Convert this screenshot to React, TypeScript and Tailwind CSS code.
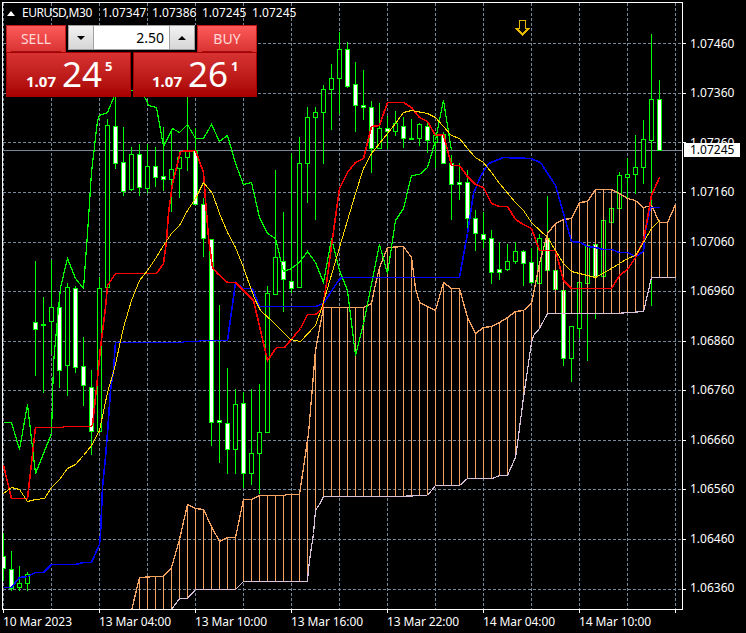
import React from "react";

type Pt = [number, number];
// x, high, low, bodyTop, bodyBottom, bearish (white body)
type Candle = [number, number, number, number, number, boolean];

const candles: Candle[] = [
  [3, 533, 580, 556, 568, true], [11, 551, 590, 569, 588, true], [19, 566, 590, 583, 587, false], [27, 572, 590, 574, 583, false],
  [35, 261, 375, 322, 329, true], [43, 297, 392, 324, 325, false], [51, 260, 353, 307, 321, false], [59, 302, 387, 307, 370, true],
  [67, 283, 395, 287, 365, false], [75, 286, 372, 288, 367, true], [83, 337, 405, 366, 385, true], [91, 370, 454, 387, 431, true],
  [99, 277, 432, 288, 431, false], [107, 119, 287, 125, 287, false], [115, 97, 168, 126, 163, true], [123, 127, 195, 162, 191, true],
  [131, 147, 190, 154, 189, false], [139, 144, 195, 154, 187, true], [147, 144, 192, 166, 188, false], [155, 147, 186, 166, 177, true],
  [163, 127, 190, 176, 179, true], [171, 130, 211, 169, 179, false], [179, 150, 197, 157, 168, false], [187, 97, 170, 150, 157, false],
  [195, 128, 204, 150, 204, true], [203, 198, 256, 204, 238, true], [211, 239, 445, 239, 422, true], [219, 305, 462, 420, 422, true],
  [227, 368, 473, 423, 449, true], [235, 389, 473, 404, 449, false], [243, 392, 487, 403, 473, true], [251, 389, 484, 453, 473, false],
  [259, 384, 493, 432, 453, false], [267, 286, 432, 293, 432, false], [275, 170, 294, 257, 294, false], [283, 212, 311, 261, 279, true],
  [291, 153, 292, 281, 288, true], [299, 137, 287, 163, 287, false], [307, 107, 202, 117, 163, false], [315, 107, 219, 112, 117, false],
  [323, 85, 163, 89, 112, false], [331, 64, 129, 78, 89, false], [339, 32, 113, 49, 78, false], [347, 42, 87, 49, 86, true],
  [355, 62, 131, 84, 105, true], [363, 70, 119, 105, 107, true], [371, 101, 172, 107, 148, true], [379, 103, 148, 128, 148, false],
  [387, 116, 148, 128, 131, true], [395, 111, 135, 123, 131, false], [403, 117, 147, 126, 138, true], [411, 119, 139, 138, 138, false],
  [419, 123, 145, 124, 138, false], [427, 123, 152, 126, 140, true], [435, 133, 167, 135, 142, false], [443, 132, 163, 134, 163, true],
  [451, 155, 219, 163, 184, true], [459, 163, 199, 182, 184, true], [467, 170, 230, 182, 218, true], [475, 210, 250, 218, 233, true],
  [483, 212, 247, 234, 239, true], [491, 230, 283, 238, 272, true], [499, 242, 279, 269, 272, true], [507, 244, 270, 261, 269, false],
  [515, 242, 263, 251, 261, false], [523, 250, 285, 251, 263, true], [531, 248, 283, 262, 282, true], [539, 234, 284, 238, 283, false],
  [547, 196, 270, 238, 270, true], [555, 270, 289, 270, 289, true], [563, 290, 365, 290, 358, true], [571, 326, 381, 326, 358, false],
  [579, 282, 337, 282, 328, false], [587, 245, 360, 245, 283, false], [595, 244, 318, 244, 276, true], [603, 220, 276, 220, 276, false],
  [611, 208, 222, 208, 222, false], [619, 172, 208, 175, 208, false], [627, 158, 197, 174, 177, false], [635, 135, 193, 167, 174, false],
  [643, 120, 183, 139, 167, false], [651, 34, 305, 99, 140, false], [659, 80, 150, 99, 150, true],
];

const red: Pt[] = [[3,465],[11,498],[27,498],[35,427],[63,427],[63,426],[90,426],[92,425],[97,378],[100,347],[105,307],[107,285],[115,273],[156,273],[163,263],[166,240],[168,213],[172,183],[180,151],[195,150],[203,172],[205,200],[208,237],[212,267],[217,273],[227,282],[235,282],[253,300],[267,360],[276,347],[284,347],[300,328],[307,314],[315,314],[322,308],[326,283],[332,238],[339,188],[347,172],[355,162],[363,158],[371,126],[379,125],[387,102],[403,102],[411,107],[419,117],[427,121],[435,135],[443,134],[451,165],[459,165],[467,176],[475,184],[483,187],[491,203],[499,206],[507,206],[515,219],[523,224],[531,228],[539,250],[555,250],[563,280],[571,288],[611,288],[619,275],[627,269],[635,257],[643,240],[651,195],[659,177]];
const gold: Pt[] = [[3,493],[11,487],[19,489],[27,501],[35,499],[44,498],[51,487],[59,479],[67,468],[75,464],[83,455],[91,445],[99,430],[107,392],[114,368],[123,327],[131,300],[139,280],[147,270],[155,258],[163,245],[171,233],[179,225],[187,210],[195,198],[203,182],[212,193],[219,213],[227,232],[235,247],[243,267],[250,287],[255,300],[260,310],[273,322],[290,339],[300,341],[315,325],[322,305],[327,288],[339,247],[355,193],[363,168],[371,153],[379,143],[387,133],[395,123],[403,112],[411,110],[427,113],[435,117],[443,126],[451,135],[459,138],[467,148],[475,157],[483,162],[491,172],[499,183],[515,202],[523,210],[531,222],[547,237],[555,250],[563,263],[571,271],[579,273],[595,277],[611,268],[627,258],[635,255],[643,242],[651,228],[659,220]];
const blue: Pt[] = [[3,587],[11,587],[19,577],[27,576],[35,572],[43,572],[51,564],[75,564],[83,562],[91,562],[99,544],[100,533],[102,487],[105,457],[107,432],[110,390],[113,370],[115,342],[183,342],[183,341],[199,341],[199,340],[227,340],[235,282],[243,288],[252,288],[259,306],[315,306],[323,303],[330,292],[338,280],[341,277],[459,277],[467,233],[473,193],[480,176],[488,163],[503,157],[530,158],[540,162],[555,185],[563,213],[571,241],[580,242],[587,246],[595,247],[603,249],[611,249],[619,252],[627,252],[635,256],[643,251],[645,230],[650,207],[659,207]];
const chikou: Pt[] = [[3,422],[11,422],[19,449],[27,404],[35,473],[51,433],[53,363],[55,340],[60,287],[67,258],[75,278],[83,288],[87,233],[91,172],[97,120],[99,115],[107,112],[112,100],[116,90],[140,90],[146,100],[148,105],[156,107],[163,146],[172,128],[179,132],[187,124],[195,138],[203,138],[211,124],[219,141],[227,135],[235,163],[243,184],[251,182],[259,217],[267,233],[275,238],[283,271],[291,268],[299,262],[307,251],[315,262],[323,282],[331,238],[339,270],[347,290],[355,355],[363,323],[371,284],[379,244],[387,273],[395,220],[403,208],[411,175],[419,174],[427,167],[435,140],[443,100],[451,150]];
const spanA: Pt[] = [[131,610],[139,577],[155,576],[163,576],[171,567],[179,539],[187,504],[195,508],[203,509],[211,526],[219,541],[227,537],[235,537],[243,499],[251,499],[259,495],[283,495],[287,494],[299,494],[303,467],[308,433],[315,350],[323,307],[363,307],[371,303],[374,288],[379,267],[387,247],[403,246],[411,257],[415,288],[419,302],[427,306],[435,310],[443,282],[451,288],[459,288],[467,317],[475,333],[483,327],[491,326],[499,322],[507,317],[515,311],[523,310],[531,303],[539,263],[547,233],[555,223],[563,219],[571,218],[579,202],[587,201],[595,189],[611,189],[619,193],[627,198],[635,200],[643,207],[651,205],[659,222],[667,222],[675,204]];
const spanB: Pt[] = [[131,660],[171,609],[179,598],[187,598],[195,589],[235,589],[243,581],[307,581],[308,568],[310,553],[313,533],[315,510],[320,502],[323,496],[391,496],[427,495],[435,485],[459,485],[467,478],[492,478],[499,475],[507,475],[515,457],[517,443],[523,397],[531,342],[533,335],[539,328],[547,313],[615,313],[643,311],[651,277],[675,277]];

const gridX = [3, 51, 99, 147, 195, 243, 291, 339, 387, 435, 483, 531, 579, 627, 675];
const gridY = [43, 93, 142, 192, 242, 291, 341, 390, 440, 489, 539, 589];
const prices = ["1.07460", "1.07360", "1.07260", "1.07160", "1.07060", "1.06960", "1.06860", "1.06760", "1.06660", "1.06560", "1.06460", "1.06360"];
const dates = ["10 Mar 2023", "13 Mar 04:00", "13 Mar 10:00", "13 Mar 16:00", "13 Mar 22:00", "14 Mar 04:00", "14 Mar 10:00"];
const timeTicks = [3, 99, 195, 291, 387, 483, 579, 675];

const at = (line: Pt[], x: number) => {
  for (let i = 1; i < line.length; i++) {
    if (x <= line[i][0]) {
      const [x0, y0] = line[i - 1];
      const [x1, y1] = line[i];
      if (x1 === x0) continue;
      return y0 + ((y1 - y0) * (x - x0)) / (x1 - x0);
    }
  }
  return line[line.length - 1][1];
};
const hatchX: number[] = [];
for (let x = 139; x <= 675; x += 8) hatchX.push(x);
const pts = (line: Pt[]) => line.map(([x, y]) => `${x + 0.5},${y + 0.5}`).join(" ");

function Chart() {
  return (
    <svg width={686} height={613} viewBox="0 0 686 613" shapeRendering="crispEdges" className="block shrink-0">
      <defs>
        <clipPath id="plot"><rect x={3} y={3} width={679} height={606} /></clipPath>
      </defs>
      <g stroke="#778899" strokeDasharray="3 2" strokeWidth={1}>
        {gridY.map((y) => <line key={y} x1={3} x2={682} y1={y + 0.5} y2={y + 0.5} />)}
        {gridX.map((x) => <line key={x} x1={x + 0.5} x2={x + 0.5} y1={3} y2={609} />)}
      </g>
      <line x1={3} x2={682} y1={150.5} y2={150.5} stroke="#778899" />
      <g clipPath="url(#plot)">
        {candles.map(([x, hi, lo, top, bot, bear]) => (
          <g key={x}>
            <line x1={x + 0.5} x2={x + 0.5} y1={hi} y2={lo + 1} stroke="#00ff00" />
            <rect x={x - 1.5} y={top + 0.5} width={4} height={Math.max(bot - top, 1)} fill={bear ? "#ffffff" : "#000000"} stroke="#00ff00" />
          </g>
        ))}
        {hatchX.map((x) => (
          <line key={x} x1={x + 0.5} x2={x + 0.5} y1={at(spanA, x)} y2={at(spanB, x)} stroke="#f4a460" />
        ))}
        <polyline points={pts(spanB)} fill="none" stroke="#d8bfd8" strokeWidth={1.2} />
        <polyline points={pts(spanA)} fill="none" stroke="#f4a460" strokeWidth={1.3} />
        <polyline points={pts(chikou)} fill="none" stroke="#00ff00" strokeWidth={1.2} />
        <polyline points={pts(blue)} fill="none" stroke="#0000ff" strokeWidth={1.6} />
        <polyline points={pts(red)} fill="none" stroke="#ff0000" strokeWidth={1.6} />
        <polyline points={pts(gold)} fill="none" stroke="#ffd700" />
      </g>
      <path d="M519.5 28.5V20.5H525.5V28.5H528.5L522.5 34.5L516.5 28.5Z" fill="none" stroke="#e6b800" strokeWidth={1.5} />
      <path d="M2.5 2V609.5H682.5V2.5H2" fill="none" stroke="#ffffff" />
      <g stroke="#ffffff">
        {gridY.map((y) => <line key={y} x1={683} x2={686} y1={y + 0.5} y2={y + 0.5} />)}
        {timeTicks.map((x) => <line key={x} x1={x + 0.5} x2={x + 0.5} y1={610} y2={613} />)}
      </g>
    </svg>
  );
}

function PriceBox({ big, small, sup, boxClass }: { big: string; small: string; sup: string; boxClass: string }) {
  return (
    <div className={`h-full pt-[3px] border border-[#a80000] bg-gradient-to-b from-[#d83232] to-[#a80000] text-white flex items-baseline font-['Noto_Sans',sans-serif] leading-none ${boxClass}`}>
      <span className="text-[15px] font-bold">{small}</span>
      <span className="ml-[6px] text-[35px]">{big}</span>
      <span className="ml-[3px] self-start mt-[4px] text-[13px] font-bold">{sup}</span>
    </div>
  );
}

function Stepper() {
  return (
    <div className="w-[131px] h-full bg-black px-[2px] pb-[2px]">
      <div className="h-full flex border border-[#a0a0a0] bg-white">
        <button className="w-[24px] flex items-center justify-center bg-gradient-to-b from-[#f2f2f2] to-[#d6d6d6]">
          <span className="w-0 h-0 border-x-[4px] border-x-transparent border-t-[4px] border-t-black" />
        </button>
        <div className="flex-1 text-right pr-[5px] text-[14px] leading-[23px] text-black border-x border-[#a0a0a0] font-['Noto_Sans',sans-serif]">2.50</div>
        <button className="w-[24px] flex items-center justify-center bg-gradient-to-b from-[#f2f2f2] to-[#d6d6d6]">
          <span className="w-0 h-0 border-x-[4px] border-x-transparent border-b-[4px] border-b-black" />
        </button>
      </div>
    </div>
  );
}

function SideButton({ label }: { label: string }) {
  return (
    <div className="w-[60px] h-full px-[4px] border border-[#c01818] border-b-0 bg-gradient-to-b from-[#ff5a5a] to-[#d83232]">
      <div className="h-full text-center text-[14px] leading-[25px] text-[#ffd8d8] border-b border-[#a01010] font-['Noto_Sans',sans-serif]">{label}</div>
    </div>
  );
}

export default function App() {
  return (
    <div className="relative w-[746px] h-[633px] bg-black overflow-hidden text-white text-[12px] font-['Noto_Sans',sans-serif]">
      <div className="flex h-[613px]">
        <Chart />
        <div className="flex flex-col pt-[19px] pl-[4px]">
          {prices.map((p) => (
            <div key={p} className="h-[49.64px] flex items-center leading-none">{p}</div>
          ))}
        </div>
      </div>
      <div className="flex pl-[3px] h-[17px] items-center leading-none">
        {dates.map((d) => (
          <div key={d} className="w-[96px] shrink-0 tracking-[-0.1px]">{d}</div>
        ))}
      </div>

      {/* last price tag */}
      <div className="absolute left-[684px] top-[143px] w-[56px] h-[14px] pl-[6px] bg-white text-black leading-[14px]">1.07245</div>

      {/* header */}
      <div className="absolute left-[7px] top-[6px] h-[14px] flex items-center leading-none">
        <span className="w-0 h-0 border-x-[4px] border-x-transparent border-b-[5px] border-b-white mr-[7px]" />
        <span className="w-[80px] tracking-[-0.45px]">EURUSD,M30</span>
        <span className="w-[50px]">1.07347</span>
        <span className="w-[50px]">1.07386</span>
        <span className="w-[50px]">1.07245</span>
        <span>1.07245</span>
      </div>

      {/* one-click trading panel */}
      <div className="absolute left-[6px] top-[25px] w-[251px] h-[72px] flex flex-col">
        <div className="h-[27px] flex">
          <SideButton label="SELL" />
          <Stepper />
          <SideButton label="BUY" />
        </div>
        <div className="h-[45px] flex justify-between">
          <PriceBox small="1.07" big="24" sup="5" boxClass="w-[125px] pl-[19px]" />
          <PriceBox small="1.07" big="26" sup="1" boxClass="w-[124px] pl-[18px]" />
        </div>
      </div>
    </div>
  );
}
